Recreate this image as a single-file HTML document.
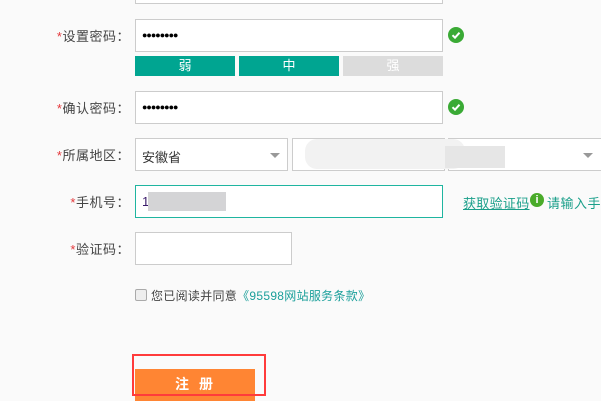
<!DOCTYPE html>
<html><head><meta charset="utf-8"><style>
body{margin:0;width:601px;height:401px;overflow:hidden;background:#fafafa;font-family:"Liberation Sans","Noto Sans CJK SC",sans-serif;font-size:13px;color:#333;position:relative}
.a{position:absolute}
.in{position:absolute;box-sizing:border-box;border:1px solid #ccc;background:#fff;height:33px}
.lb{position:absolute;right:471px;text-align:right;white-space:nowrap;color:#444;letter-spacing:0.5px}
.lb i{color:#e4393c;font-style:normal}
.dots{position:absolute;left:6px;top:10px;font-size:9px;letter-spacing:-1px;color:#000}
.bar{position:absolute;top:56px;height:20px;color:#fff;text-align:center;line-height:20px;font-size:13px}
.ok{position:absolute;width:16px;height:16px;border-radius:50%;background:#3aaa35}
.tri{position:absolute;width:0;height:0;border-left:5px solid transparent;border-right:5px solid transparent;border-top:5px solid #999}
</style></head><body>
<div class="in" style="left:135px;top:-20px;width:308px;height:24px"></div>

<div class="lb" style="top:26px"><i>*</i>设置密码：</div>
<div class="in" style="left:135px;top:19px;width:308px"><span class="dots">●●●●●●●●</span></div>
<div class="ok" style="left:448px;top:27px"><svg width="16" height="16"><path d="M4.5 8.2l2.5 2.5 4.5-5" stroke="#fff" stroke-width="2" fill="none"/></svg></div>
<div class="bar" style="left:135px;width:100px;background:#00a591">弱</div>
<div class="bar" style="left:239px;width:100px;background:#00a591">中</div>
<div class="bar" style="left:343px;width:100px;background:#dcdcdc">强</div>

<div class="lb" style="top:98px"><i>*</i>确认密码：</div>
<div class="in" style="left:135px;top:91px;width:308px"><span class="dots">●●●●●●●●</span></div>
<div class="ok" style="left:448px;top:99px"><svg width="16" height="16"><path d="M4.5 8.2l2.5 2.5 4.5-5" stroke="#fff" stroke-width="2" fill="none"/></svg></div>

<div class="lb" style="top:145px"><i>*</i>所属地区：</div>
<div class="in" style="left:135px;top:138px;width:153px"><span class="a" style="left:6px;top:8px">安徽省</span><div class="tri" style="left:134px;top:14px"></div></div>
<div class="in" style="left:292px;top:138px;width:153px"></div>
<div class="in" style="left:448px;top:138px;width:160px"><div class="tri" style="left:134px;top:14px"></div></div>
<div class="a" style="left:305px;top:139px;width:160px;height:30px;background:#f2f2f2;border-radius:12px"></div>
<div class="a" style="left:445px;top:146px;width:60px;height:22px;background:#e6e6e6"></div>

<div class="lb" style="top:192px"><i>*</i>手机号：</div>
<div class="in" style="left:135px;top:185px;width:308px;border-color:#1fb5a0"><span class="a" style="left:6px;top:8px;color:#3a1a6a">1</span><div class="a" style="left:12px;top:6px;width:78px;height:19px;background:#d4d4d6"></div></div>
<span class="a" style="left:463px;top:193px;color:#1a9f8a;text-decoration:underline;letter-spacing:0.3px">获取验证码</span>
<div class="a" style="left:530px;top:193px;width:14px;height:14px;border-radius:50%;background:#4aab2a;color:#fff;font-size:11px;text-align:center;line-height:14px;font-weight:bold">i</div>
<span class="a" style="left:547px;top:193px;color:#1a9f8a;white-space:nowrap;letter-spacing:0.5px">请输入手机</span>

<div class="lb" style="top:239px"><i>*</i>验证码：</div>
<div class="in" style="left:135px;top:232px;width:157px"></div>

<div class="a" style="left:135px;top:289px;width:10px;height:10px;border:1px solid #aaa;border-radius:2px;background:#eee"></div>
<span class="a" style="left:151px;top:287px;font-size:12px;color:#444;letter-spacing:0.3px">您已阅读并同意<span style="color:#1a9f9a">《95598网站服务条款》</span></span>

<div class="a" style="left:135px;top:369px;width:120px;height:32px;background:#ff8533;color:#fff;font-weight:bold;text-align:center;line-height:30px;font-size:14px;letter-spacing:10px;text-indent:8px">注册</div>
<div class="a" style="left:132px;top:354px;width:130px;height:38px;border:2px solid #ff3b3b"></div>
</body></html>
